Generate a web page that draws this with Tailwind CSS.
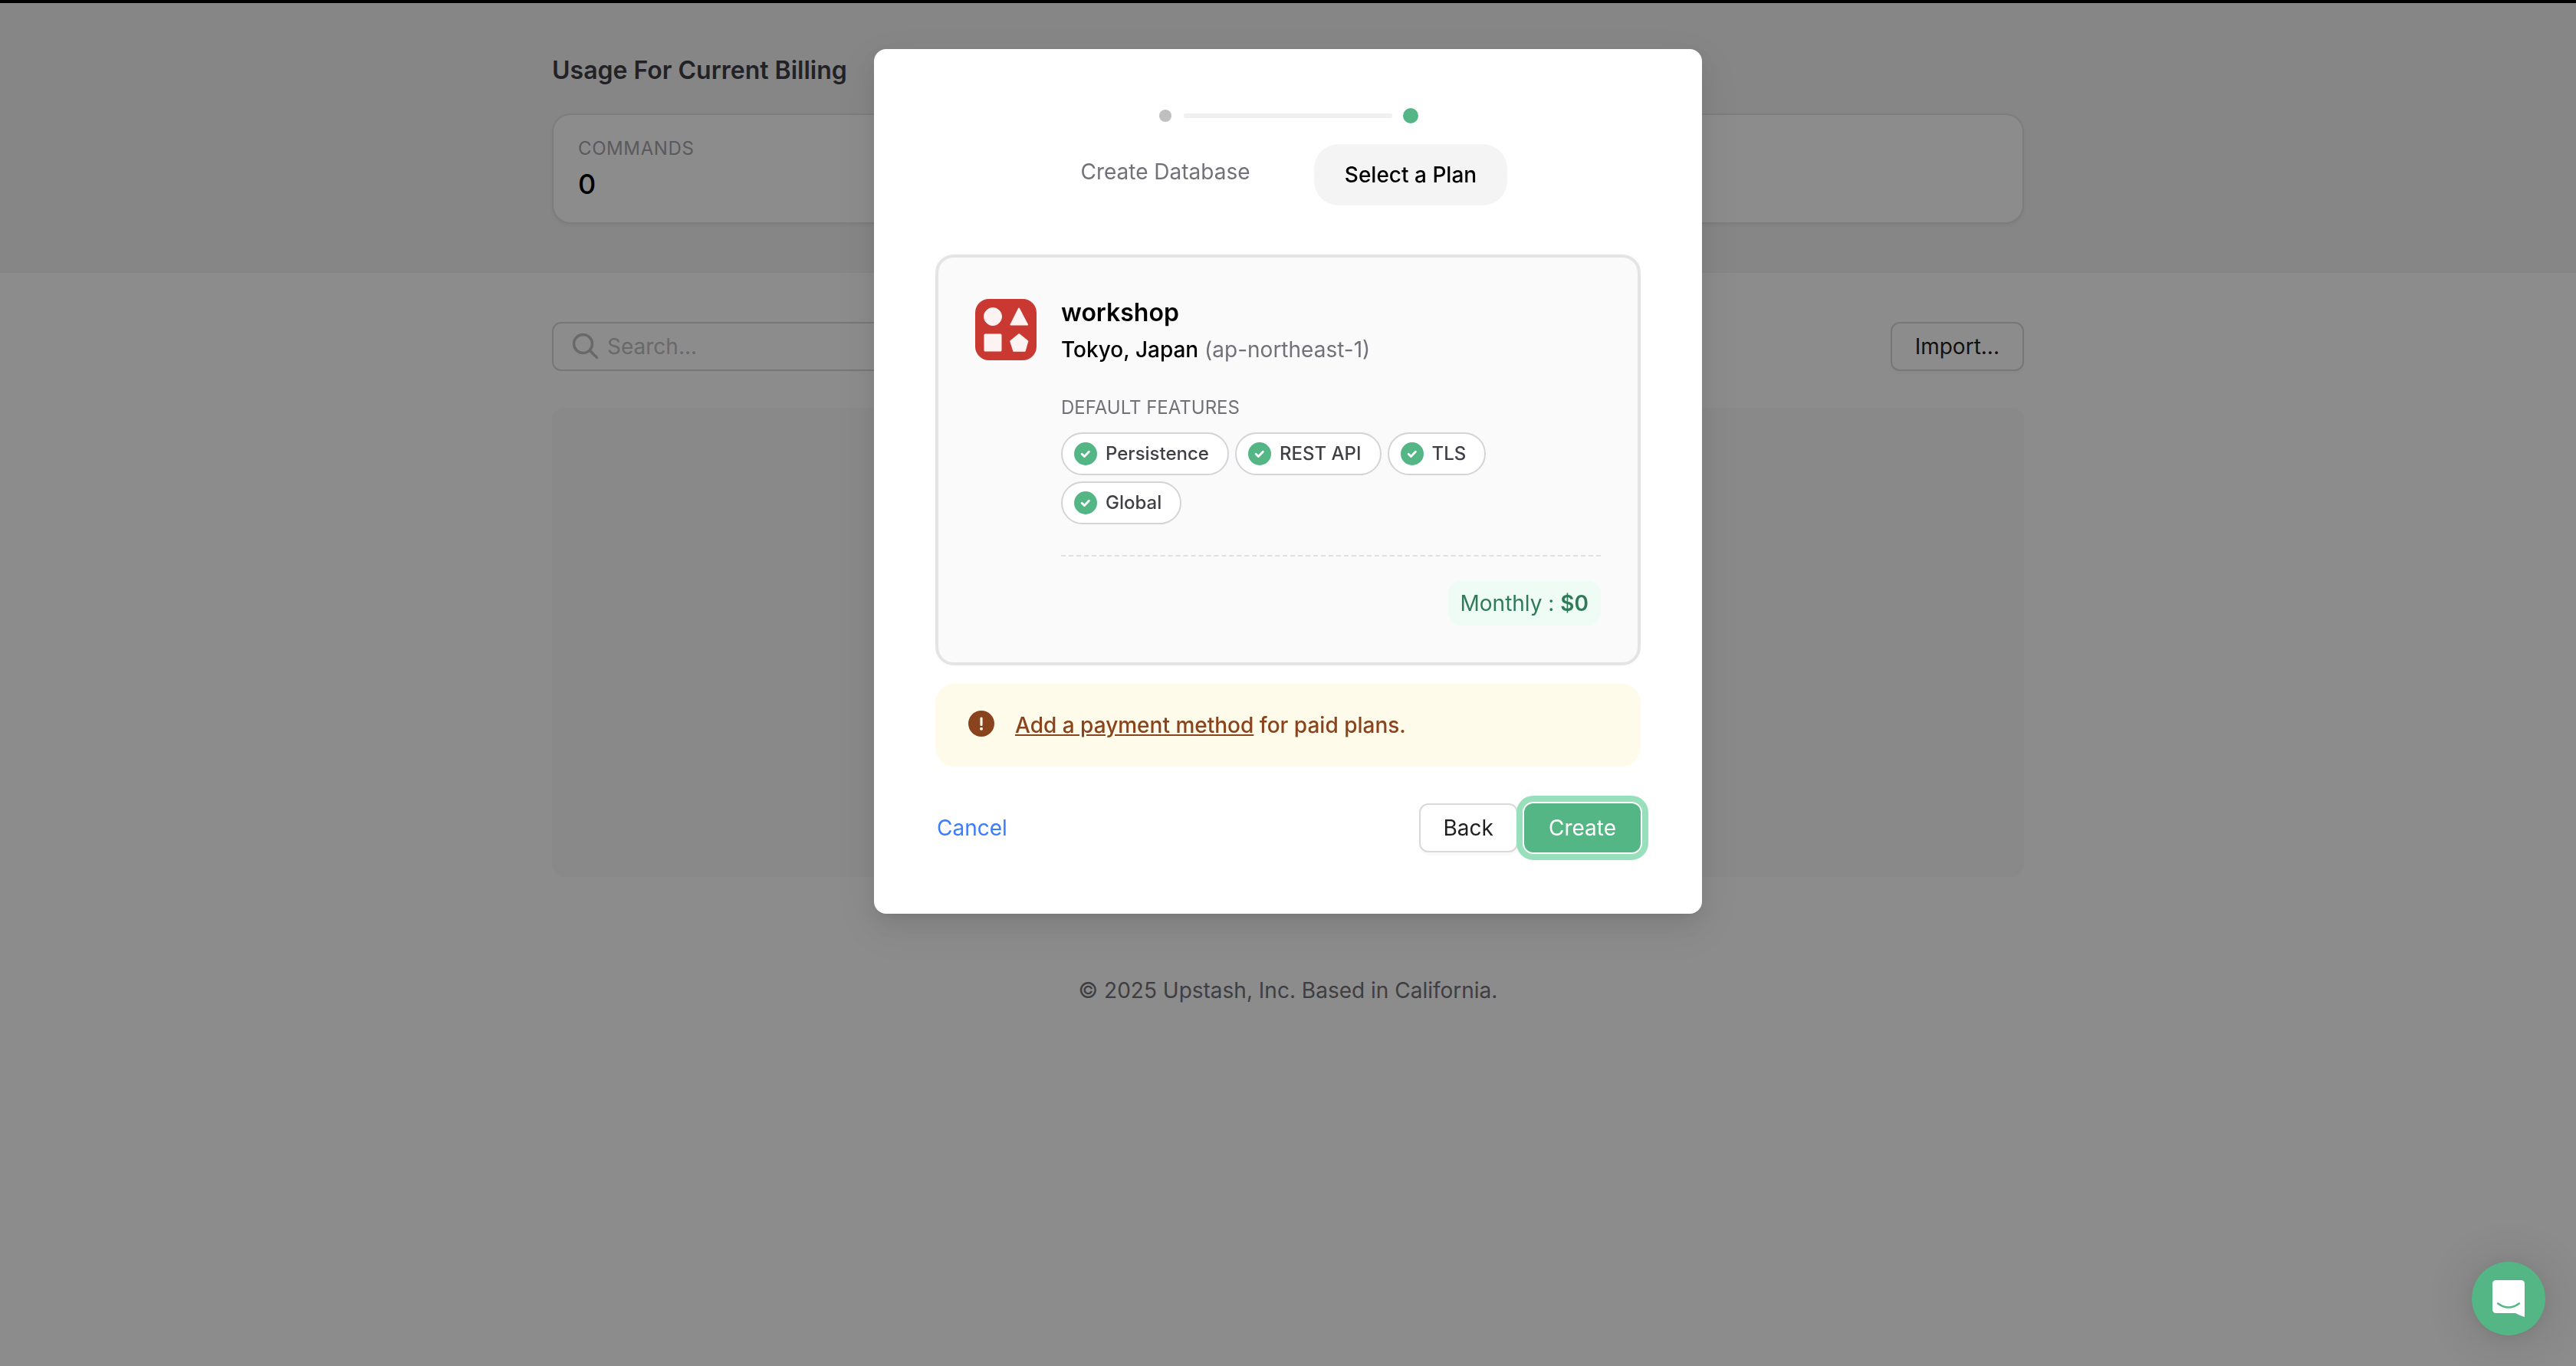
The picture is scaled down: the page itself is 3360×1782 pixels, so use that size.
<!DOCTYPE html>
<html lang="en">
<head>
<meta charset="utf-8">
<title>Upstash Console</title>
<script src="https://cdn.jsdelivr.net/npm/@tailwindcss/browser@4"></script>
</head>
<body class="min-h-screen overflow-hidden bg-white font-['Inter',sans-serif] text-[28px] leading-11 text-black">

<svg class="hidden" aria-hidden="true">
  <symbol id="check" viewBox="0 0 32 32">
    <circle cx="16" cy="16" r="15" fill="#54b585"/>
    <path d="M11.200 16.200l3.200 3.300 6-6.300" fill="none" stroke="#fff" stroke-width="2.800" stroke-linecap="round" stroke-linejoin="round"/>
  </symbol>
</svg>

<div class="border-t-4 border-black bg-[#f4f4f4] pt-16 pb-16">
  <section class="mx-auto w-full max-w-[1920px]">
    <h2 class="text-[32px] leading-12 font-semibold text-[#3f3f46]">Usage For Current Billing</h2>
    <div class="mt-8 rounded-3xl border-2 border-[#e4e4e7] bg-white px-8 py-[26px] shadow-[0_2px_4px_rgba(0,0,0,0.05)]">
      <div class="text-2xl leading-9 tracking-wide text-[#a5a5ac]">COMMANDS</div>
      <div class="mt-1 text-4xl leading-12 font-medium">0</div>
    </div>
  </section>
</div>

<main class="mx-auto w-full max-w-[1920px] pt-16">
  <div class="flex items-center justify-between">
    <label class="flex h-16 w-[600px] items-center gap-1.5 rounded-xl border-2 border-[#d9d9d9] pr-6 pl-6">
      <svg class="size-10 shrink-0" viewBox="0 0 40 40" fill="none" stroke="#bfbfbf" stroke-width="3.500" stroke-linecap="round" aria-hidden="true">
        <circle cx="14.500" cy="16.500" r="12"/><path d="M23.500 25.500L32.500 34.500"/>
      </svg>
      <input type="text" aria-label="Search" placeholder="Search..." class="w-full min-w-0 bg-transparent outline-none placeholder:text-[#bfbfbf]">
    </label>
    <button class="h-16 rounded-xl border-2 border-[#d9d9d9] px-[30px] text-[#1f1f1f] shadow-[0_4px_0_rgba(0,0,0,0.02)]">Import...</button>
  </div>
  <div class="mt-12 h-[612px] rounded-2xl bg-[#f9f9f9]"></div>
</main>
<footer class="pt-[126px] text-center text-[#71717a]">© 2025 Upstash, Inc. Based in California.</footer>

<div class="fixed inset-0 flex items-start justify-center bg-black/45 pt-16">
  <div role="dialog" aria-modal="true" aria-label="Create database" class="w-full max-w-[1080px] rounded-2xl bg-white px-20 pt-[77px] pb-20 shadow-[0_12px_32px_0_rgba(0,0,0,0.08),0_6px_12px_-8px_rgba(0,0,0,0.12),0_18px_56px_16px_rgba(0,0,0,0.05)]">
    <div class="flex items-center justify-center gap-3.5">
      <span class="flex size-5 items-center justify-center"><span class="size-4 rounded-full bg-[#bfbfbf]"></span></span>
      <span class="h-1.5 w-[272px] rounded-xs bg-[#f0f0f0]"></span>
      <span class="size-5 rounded-full bg-[#54b585]"></span>
    </div>
    <ol class="mx-auto mt-[27px] grid w-[640px] grid-cols-2 items-start justify-items-center">
      <li class="pt-3.5 text-[#71717a]">Create Database</li>
      <li class="rounded-[32px] bg-[#f4f4f4] px-10 py-[18px] font-medium">Select a Plan</li>
    </ol>

    <section class="mt-16 flex items-start gap-8 rounded-3xl border-4 border-[#e4e4e7] bg-[#fafafa] px-12 pt-[50px] pb-12">
      <svg class="mt-1 size-20 shrink-0" viewBox="0 0 80 80" aria-hidden="true">
        <rect width="80" height="80" rx="18" fill="#c93831"/>
        <g fill="#fdf3f2" stroke="#fdf3f2" stroke-linejoin="round">
          <circle cx="23" cy="23" r="11.500"/>
          <path d="M57 12.500L68 33.500H46.500Z" stroke-width="2"/>
          <rect x="13" y="47" width="20" height="20" stroke-width="3"/>
          <path d="M57.200 46.500L68 55.200L64.500 67.500H50.500L46.500 55.200Z" stroke-width="2.600"/>
        </g>
      </svg>
      <div class="min-w-0 flex-1">
        <h3 class="text-[32px] font-semibold">workshop</h3>
        <p class="mt-1 text-[#71717a]"><span class="font-medium text-black">Tokyo, Japan</span> (ap-northeast-1)</p>
        <h4 class="mt-9 text-2xl leading-9 text-[#71717a]">DEFAULT FEATURES</h4>
        <ul class="mt-3.5 flex max-w-[600px] flex-wrap gap-2 text-2xl font-medium text-[#3f3f46]">
          <li class="flex h-14 items-center gap-2.5 rounded-full border-2 border-[#d4d4d8] bg-white pr-6 pl-3.5"><svg class="size-8"><use href="#check"/></svg>Persistence</li>
          <li class="flex h-14 items-center gap-2.5 rounded-full border-2 border-[#d4d4d8] bg-white pr-6 pl-3.5"><svg class="size-8"><use href="#check"/></svg>REST API</li>
          <li class="flex h-14 items-center gap-2.5 rounded-full border-2 border-[#d4d4d8] bg-white pr-6 pl-3.5"><svg class="size-8"><use href="#check"/></svg>TLS</li>
          <li class="flex h-14 items-center gap-2.5 rounded-full border-2 border-[#d4d4d8] bg-white pr-6 pl-3.5"><svg class="size-8"><use href="#check"/></svg>Global</li>
        </ul>
        <div class="mt-10 flex justify-end border-t-2 border-dashed border-[#e0e0e0] pt-8">
          <div class="rounded-2xl bg-[#effbf5] px-4 py-[7px] text-[#2f7a57]">Monthly : <b class="font-semibold">$0</b></div>
        </div>
      </div>
    </section>

    <div class="mt-6 flex items-center gap-6 rounded-3xl bg-[#fffbeb] px-10 py-8 font-medium text-[#89431d]">
      <svg class="size-10 shrink-0" viewBox="0 0 40 40" aria-hidden="true">
        <circle cx="20" cy="18" r="17" fill="#89431d"/>
        <path d="M20 11v8.500" stroke="#fffbeb" stroke-width="3.200" stroke-linecap="round"/>
        <circle cx="20" cy="24.800" r="2" fill="#fffbeb"/>
      </svg>
      <p><a href="#" class="underline">Add a payment method</a> for paid plans.</p>
    </div>

    <div class="mt-12 flex items-center gap-2">
      <button class="mr-auto h-16 px-0.5 text-[#3b7cff]">Cancel</button>
      <button class="h-16 rounded-xl border-2 border-[#d9d9d9] bg-white px-[30px] text-[#1f1f1f] shadow-[0_4px_0_rgba(0,0,0,0.02)]">Back</button>
      <button class="h-16 rounded-xl bg-[#54b585] px-8 text-white outline-8 outline-offset-2 outline-[#98e0bb]">Create</button>
    </div>
  </div>
</div>

<button aria-label="Open chat" class="fixed right-10 bottom-10 flex size-24 items-center justify-center rounded-full bg-[#54b585] shadow-[0_2px_12px_rgba(0,0,0,0.06),0_4px_64px_rgba(0,0,0,0.16)]">
  <svg class="size-12" viewBox="0 0 48 48" aria-hidden="true">
    <path d="M8 0H40Q45 0 45 5V48Q38 46 33 43H8Q3 43 3 38V5Q3 0 8 0Z" fill="#fff"/>
    <path d="M10.200 30.500Q24 40.500 37.800 30.500" fill="none" stroke="#54b585" stroke-width="2.500" stroke-linecap="round"/>
  </svg>
</button>
</body>
</html>
